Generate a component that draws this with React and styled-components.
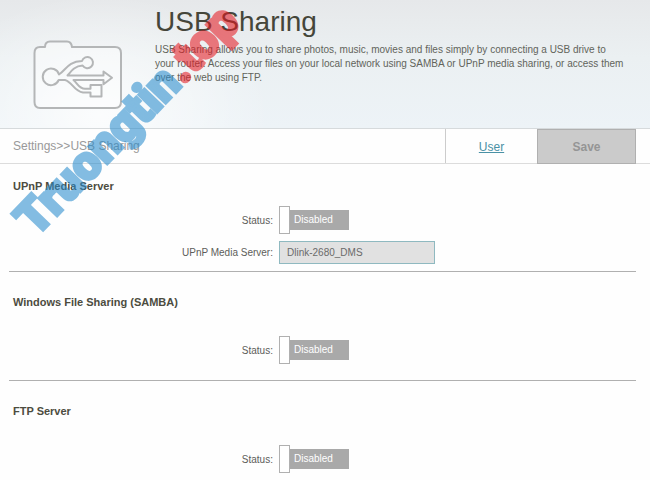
import React, { useId, useState } from "react";
import styled, { createGlobalStyle } from "styled-components";

const GlobalStyle = createGlobalStyle`
	body {
		margin: 0;
		background: #fefefe;
		font-family: "Liberation Sans", Arial, sans-serif;
		font-size: 10px;
		color: #5d5d5a;
	}
	*, *::before, *::after {
		box-sizing: border-box;
	}
`;

const UsbFolderIcon = () => (
	<FolderSvg viewBox="0 0 90 70" aria-hidden="true">
		<path
			d="M12 7 C12 3 14 1.5 17 1.5 H34 C37 1.5 38.5 3.5 39 7 H82 Q88 7 88 13 V62 Q88 68 82 68 H7 Q1.5 68 1.5 62 V13 Q1.5 7 7 7 Z"
			fill="#ffffff"
			fillOpacity="0.35"
		/>
		<path d="M26 34.5 C33 30 35 21.5 49 21 A5.6 5.6 0 1 1 49.6 25.5 C42 26 39 30 34.5 35.5 H70.5 V31.5 L79 37.8 L70.5 44.2 V40 H40.5 C45 44 46 48.7 52 48.7 H57.5 V45 H68.5 V56.5 H57.5 V52.5 H50 C41 51.5 39 41.5 32 40 H25.7 A8.3 8.3 0 1 1 26 34.5 Z" />
	</FolderSvg>
);

const Toggle = ({ id }) => {
	const [enabled, setEnabled] = useState(false);

	return (
		<Switch>
			<SwitchInput
				id={id}
				type="checkbox"
				checked={enabled}
				onChange={(e) => setEnabled(e.target.checked)}
			/>
			<SwitchKnob />
			<SwitchTrack $enabled={enabled}>
				{enabled ? "Enabled" : "Disabled"}
			</SwitchTrack>
		</Switch>
	);
};

const ServiceSection = ({ title, compact, children }) => {
	const id = useId();

	return (
		<Section $compact={compact}>
			<SectionTitle>{title}</SectionTitle>
			<Fields>
				<FieldLabel htmlFor={id}>Status:</FieldLabel>
				<Toggle id={id} />
				{children}
			</Fields>
		</Section>
	);
};

const App = () => (
	<Page>
		<GlobalStyle />
		<Header>
			<UsbFolderIcon />
			<HeaderText>
				<Title>USB Sharing</Title>
				<Description>
					USB Sharing allows you to share photos, music, movies and files simply
					by connecting a USB drive to
					<br />
					your router. Access your files on your local network using SAMBA or
					UPnP media sharing, or access them
					<br />
					over the web using FTP.
				</Description>
			</HeaderText>
		</Header>
		<Toolbar>
			<Breadcrumb>Settings&gt;&gt;USB Sharing</Breadcrumb>
			<UserTab>
				<UserLink href="#user">User</UserLink>
			</UserTab>
			<SaveButton type="button" disabled>
				Save
			</SaveButton>
		</Toolbar>
		<main>
			<ServiceSection title="UPnP Media Server" compact>
				<FieldLabel htmlFor="media-server">UPnP Media Server:</FieldLabel>
				<TextInput id="media-server" defaultValue="Dlink-2680_DMS" readOnly />
			</ServiceSection>
			<ServiceSection title="Windows File Sharing (SAMBA)" />
			<ServiceSection title="FTP Server" />
		</main>
		<Watermark aria-hidden="true">
			Truongtin<WatermarkSuffix>.top</WatermarkSuffix>
		</Watermark>
	</Page>
);

const Page = styled.div`
	position: relative;
`;
const Header = styled.header`
	display: flex;
	align-items: flex-start;
	gap: 32px;
	min-height: 129px;
	padding: 5px 14px 0 33px;
	border-bottom: 1px solid #d6dadc;
	background:
		radial-gradient(
			ellipse 170px 120px at 100px 115px,
			rgba(255, 255, 255, 0.8),
			rgba(255, 255, 255, 0)
		),
		linear-gradient(#e6e8ea, #ebf0f2 45%, #edf3f7);
`;
const FolderSvg = styled.svg`
	flex: none;
	width: 90px;
	height: 70px;
	margin-top: 35px;
	fill: none;
	stroke: #b4b6b7;
	stroke-width: 2;
	stroke-linejoin: round;
`;
const HeaderText = styled.div`
	flex: 1;
`;
const Title = styled.h1`
	margin: 0;
	font-size: 28px;
	line-height: 34px;
	font-weight: normal;
	color: #45463a;
`;
const Description = styled.p`
	margin: 4px 0 0;
	font-size: 10px;
	line-height: 14px;
	color: #62645b;
`;
const Toolbar = styled.div`
	display: flex;
	align-items: stretch;
	height: 35px;
	padding: 0 14px 0 13px;
	border-bottom: 1px solid #dcdcdc;
`;
const Breadcrumb = styled.div`
	flex: 1;
	font-size: 12px;
	line-height: 35px;
	color: #999;
`;
const UserTab = styled.div`
	width: 92px;
	border-left: 1px solid #ccc;
	font-size: 12px;
	line-height: 36px;
	text-align: center;
`;
const UserLink = styled.a`
	color: #4a91a5;
`;
const SaveButton = styled.button`
	width: 99px;
	height: 35px;
	padding: 0;
	border: 1px solid #b0b0b0;
	background: #cbcbcb;
	font-family: inherit;
	font-size: 12px;
	font-weight: bold;
	color: #959595;
`;
const Section = styled.section`
	margin: 0 14px 0 9px;
	padding: ${({ $compact }) => ($compact ? "13px 4px 7px" : "21px 4px 16px")};

	& > div {
		margin-top: ${({ $compact }) => ($compact ? "11px" : "25px")};
	}
	&:not(:last-child) {
		border-bottom: 1px solid #b0b0b0;
	}
`;
const SectionTitle = styled.h2`
	margin: 0;
	font-size: 11px;
	line-height: 18px;
	color: #4c4c3f;
`;
const Fields = styled.div`
	display: grid;
	grid-template-columns: 42% 1fr;
	column-gap: 6px;
	row-gap: 7px;
	align-items: center;
`;
const FieldLabel = styled.label`
	text-align: right;
`;
const Switch = styled.span`
	position: relative;
	display: flex;
	align-items: center;
	width: 70px;
	height: 28px;
`;
const SwitchInput = styled.input`
	position: absolute;
	inset: 0;
	width: 100%;
	height: 100%;
	margin: 0;
	opacity: 0;
	cursor: pointer;
`;
const SwitchKnob = styled.span`
	width: 11px;
	height: 28px;
	border: 1px solid #b0b0b0;
	background: #fff;
`;
const SwitchTrack = styled.span`
	flex: 1;
	height: 20px;
	padding-left: 4px;
	background: ${({ $enabled }) => ($enabled ? "#4a91a5" : "#a9a9a9")};
	line-height: 20px;
	color: #fff;
`;
const TextInput = styled.input`
	width: 156px;
	height: 23px;
	padding: 0 7px;
	border: 1px solid #8fb9c0;
	border-radius: 0;
	background: #e1e1e1;
	font-family: inherit;
	font-size: 10px;
	color: #6a6a6a;
`;
const Watermark = styled.div`
	position: absolute;
	left: 24px;
	top: 202px;
	transform: rotate(-46deg);
	transform-origin: 0 50%;
	font-family: Roboto, "Liberation Sans", sans-serif;
	font-size: 48px;
	line-height: 50px;
	font-weight: 900;
	color: #288ccd;
	-webkit-text-stroke: 3px currentColor;
	opacity: 0.57;
	white-space: nowrap;
	pointer-events: none;
`;
const WatermarkSuffix = styled.span`
	color: #e61b23;
`;

export default App;
